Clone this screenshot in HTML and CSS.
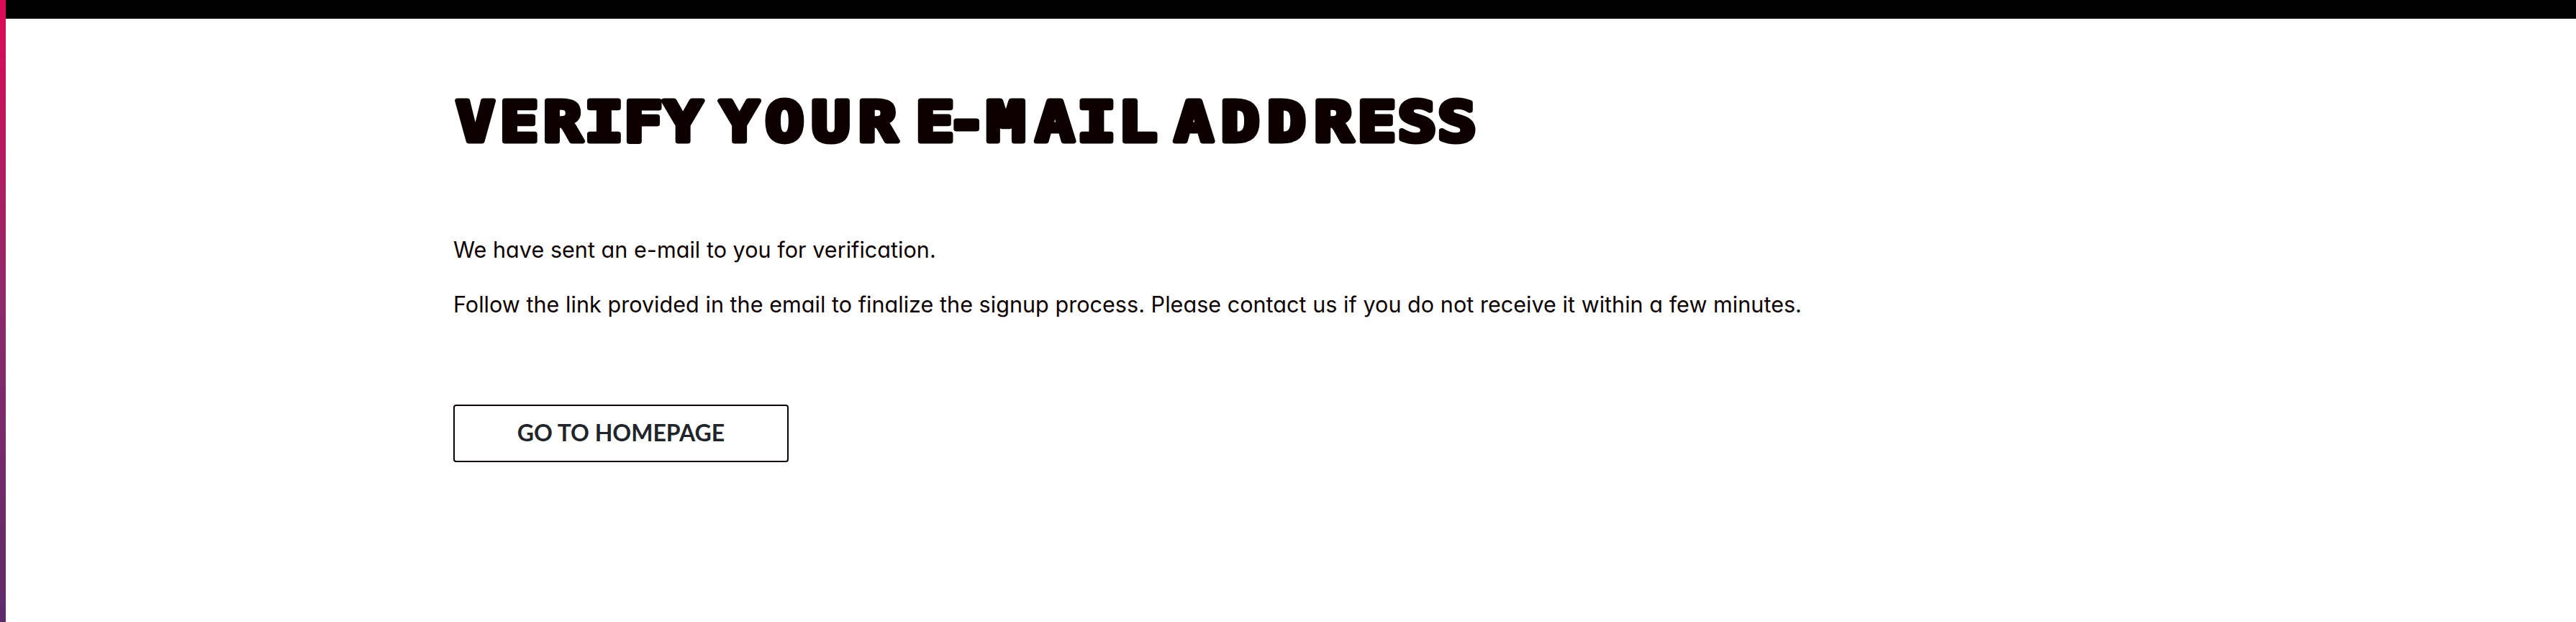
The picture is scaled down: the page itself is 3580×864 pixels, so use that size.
FILE: index.html
```html
<!DOCTYPE html>
<html lang="en">
<head>
<meta charset="utf-8">
<title>Verify your e-mail address</title>
<link rel="stylesheet" href="styles.css">
</head>
<body>
<div class="page">
  <div class="accent"></div>
  <div class="main">
    <header class="topbar"></header>
    <main class="content">
      <h1 class="title">
        <svg class="title-art" width="1430" height="80" viewBox="630 130 1430 80">
          <text class="title-text" transform="scale(1.16 1)" y="196.5" x="569.6 622.2 674.3 723.6 770.6 818.3 851.7 885.9 939.9 995.3 1051.6 1086.2 1120.1 1157.8 1205.1 1263.9 1313.8 1363 1396.6 1430.4 1485.9 1541.4 1597.7 1649.4 1697.7 1745.7">VERIFY YOUR E-MAIL ADDRESS</text>
        </svg>
      </h1>
      <p class="text first">We have sent an e-mail to you for verification.</p>
      <p class="text second">Follow the link provided in the email to finalize the signup process. Please contact us if you do not receive it within a few minutes.</p>
      <a class="button">GO TO HOMEPAGE</a>
    </main>
  </div>
</div>
</body>
</html>
```
FILE: styles.css
```css
body { margin: 0; background: #fff; color: #0d0000; }
.page { display: flex; height: 864px; overflow: hidden; }
.accent { width: 8px; background: linear-gradient(#dc0a55, #8a2a6a 50%, #5c2b68); }
.main { flex: 1; }
.topbar { height: 26px; background: #000; }
.content { display: flex; flex-direction: column; align-items: flex-start; padding: 104px 0 0 622px; }
.title { margin: 0; height: 80px; }
.title-art { display: block; overflow: visible; }
.title-text {
  font: bold 77px "DejaVu Sans Mono", monospace;
  text-anchor: middle;
  fill: #0d0000;
  stroke: #0d0000;
  stroke-width: 7px;
  stroke-linejoin: round;
}
.text {
  margin: 0;
  font: 400 30.5px/48px Inter, sans-serif;
  font-feature-settings: "cv11";
  letter-spacing: 0.05px;
  white-space: nowrap;
}
.first { margin-top: 113px; }
.second { margin-top: 28px; }
.button {
  display: flex;
  align-items: center;
  justify-content: center;
  box-sizing: border-box;
  width: 466px;
  height: 80px;
  margin-top: 115px;
  padding-bottom: 3px;
  border: 2px solid #0d0000;
  border-radius: 4px;
  color: #212529;
  font: 700 32px Lato, sans-serif;
}
```
